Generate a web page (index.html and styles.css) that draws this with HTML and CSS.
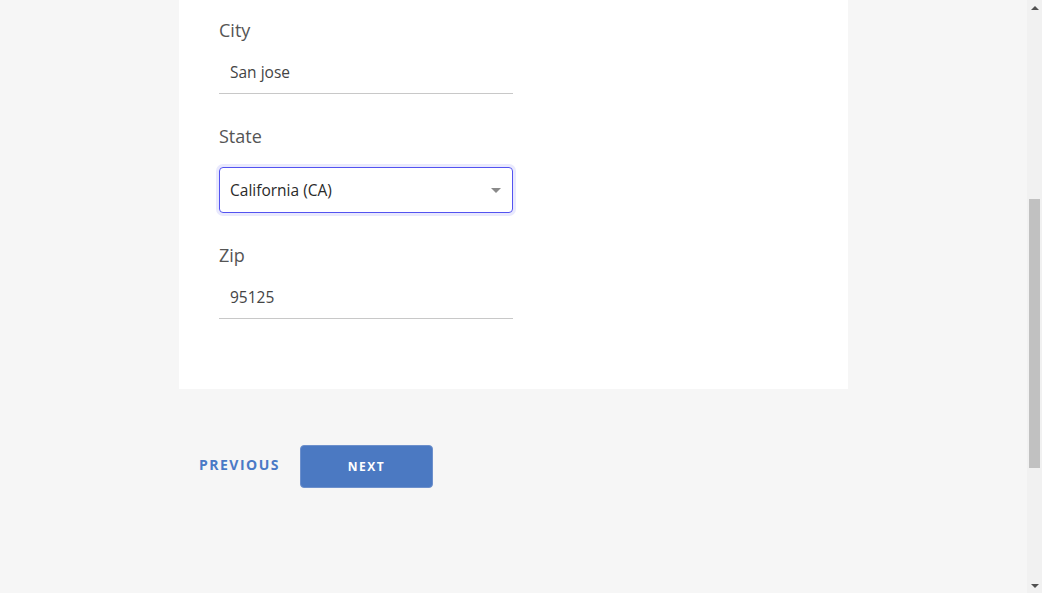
FILE: index.html
```html
<!DOCTYPE html>
<html>
<head>
<meta charset="utf-8">
<link rel="stylesheet" href="styles.css">
</head>
<body>
<div class="viewport">
  <main class="page">
    <section class="card">
      <div class="field">
        <label class="label">City</label>
        <div class="input">San jose</div>
      </div>
      <div class="field">
        <label class="label">State</label>
        <div class="select">
          <span>California (CA)</span>
          <span class="caret"></span>
        </div>
      </div>
      <div class="field">
        <label class="label">Zip</label>
        <div class="input">95125</div>
      </div>
    </section>
    <div class="actions">
      <button class="btn-prev">PREVIOUS</button>
      <button class="btn-next">NEXT</button>
    </div>
  </main>
  <div class="scrollbar">
    <div class="arrow up"></div>
    <div class="track"><div class="thumb"></div></div>
    <div class="arrow down"></div>
  </div>
</div>
</body>
</html>
```

FILE: styles.css
```css
* { box-sizing: border-box; }
html, body { margin: 0; padding: 0; height: 100%; }
body {
  background: #f6f6f6;
  font-family: "Open Sans", "Liberation Sans", sans-serif;
  overflow: hidden;
}
.viewport {
  display: flex;
  height: 593px;
}
.page {
  flex: 1;
  padding-left: 179px;
}
.card {
  width: 669px;
  background: #fff;
  padding: 18px 40px 70px 40px;
}
.field { width: 294px; }
.field + .field { margin-top: 30px; }
.label {
  display: block;
  font-size: 18px;
  line-height: 24px;
  color: #555;
}
.input {
  margin-top: 8px;
  height: 44px;
  padding-left: 11px;
  display: flex;
  align-items: center;
  font-size: 15.5px;
  color: #444;
  border-bottom: 1px solid #c8c8c8;
}
.select {
  margin-top: 19px;
  height: 46px;
  border: 1px solid #5353f0;
  border-radius: 4px;
  box-shadow: 0 0 0 3px #e9e9fd;
  display: flex;
  align-items: center;
  justify-content: space-between;
  padding: 0 11px 0 10px;
  font-size: 15.5px;
  color: #2a2a2a;
}
.caret {
  width: 0; height: 0;
  border-left: 5px solid transparent;
  border-right: 5px solid transparent;
  border-top: 5px solid #8a8a8a;
}
.actions {
  display: flex;
  align-items: center;
  margin-top: 56px;
}
.btn-prev {
  background: none;
  border: none;
  padding: 0 20px 4px 20px;
  font-family: inherit;
  font-weight: 700;
  font-size: 14px;
  letter-spacing: 1.5px;
  color: #4a7ac6;
  height: 42px;
}
.btn-next {
  width: 133px;
  height: 43px;
  background: #4b79c2;
  border: 1px solid #6d90cc;
  border-radius: 4px;
  color: #fff;
  font-family: inherit;
  font-weight: 700;
  font-size: 12px;
  letter-spacing: 1.5px;
}
.scrollbar {
  width: 15px;
  background: #f1f1f1;
  display: flex;
  flex-direction: column;
}
.arrow { height: 15px; display: flex; justify-content: center; align-items: center; }
.arrow::before {
  content: "";
  border-left: 4px solid transparent;
  border-right: 4px solid transparent;
}
.arrow.up::before { border-bottom: 4px solid #505050; }
.arrow.down::before { border-top: 4px solid #505050; }
.track { flex: 1; padding-top: 184px; }
.thumb {
  margin: 0 auto;
  width: 11px;
  height: 269px;
  background: #c1c1c1;
}
```
